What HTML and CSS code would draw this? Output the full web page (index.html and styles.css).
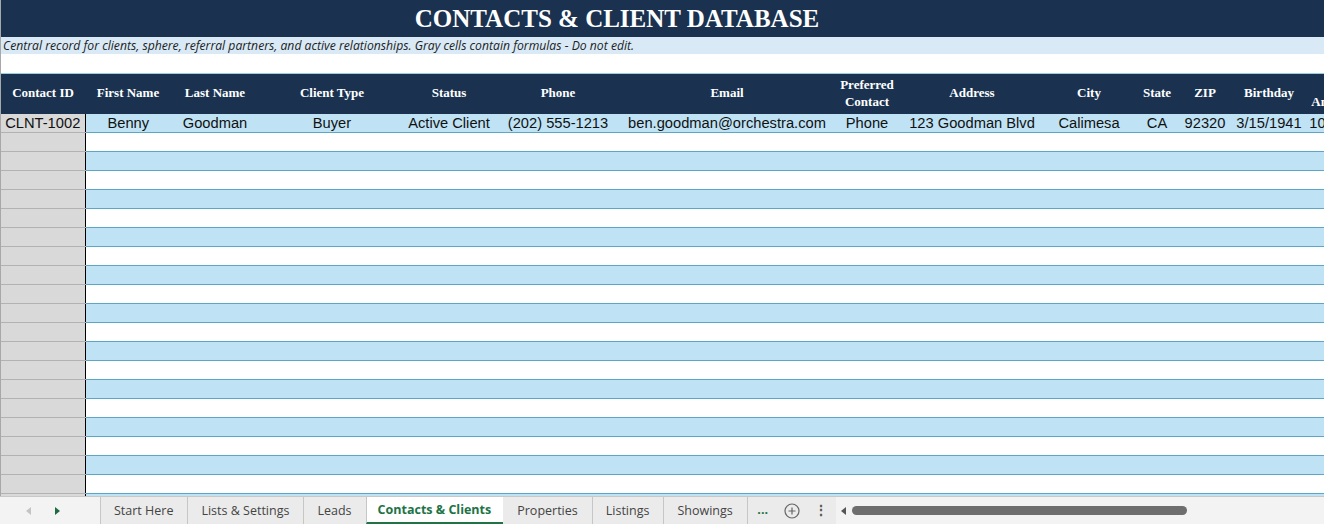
FILE: index.html
```html
<!DOCTYPE html>
<html lang="en">
<head>
    <meta charset="UTF-8">
    <title>Contacts &amp; Client Database</title>
    <link rel="stylesheet" href="styles.css">
</head>
<body>
    <div class="sheet">
        <div class="title-row">
            <div class="title">CONTACTS &amp; CLIENT DATABASE</div>
        </div>
        <div class="note-row">Central record for clients, sphere, referral partners, and active relationships. Gray cells contain formulas - Do not edit.</div>
        <div class="blank-row"></div>

        <div class="grid-wrap">
            <table class="grid" id="grid">
                <colgroup>
                    <col style="width:84px"><col style="width:86px"><col style="width:88px"><col style="width:146px">
                    <col style="width:88px"><col style="width:130px"><col style="width:208px"><col style="width:72px">
                    <col style="width:138px"><col style="width:96px"><col style="width:40px"><col style="width:56px">
                    <col style="width:72px"><col style="width:82px">
                </colgroup>
                <thead>
                    <tr>
                        <th>Contact ID</th>
                        <th>First Name</th>
                        <th>Last Name</th>
                        <th>Client Type</th>
                        <th>Status</th>
                        <th>Phone</th>
                        <th>Email</th>
                        <th>Preferred<br>Contact</th>
                        <th>Address</th>
                        <th>City</th>
                        <th>State</th>
                        <th>ZIP</th>
                        <th>Birthday</th>
                        <th>Home<br>Anniversary</th>
                    </tr>
                </thead>
                <tbody id="rows">
                    <tr class="blue">
                        <td class="id">CLNT-1002</td>
                        <td>Benny</td>
                        <td>Goodman</td>
                        <td>Buyer</td>
                        <td>Active Client</td>
                        <td>(202) 555-1213</td>
                        <td>ben.goodman@orchestra.com</td>
                        <td>Phone</td>
                        <td>123 Goodman Blvd</td>
                        <td>Calimesa</td>
                        <td>CA</td>
                        <td>92320</td>
                        <td>3/15/1941</td>
                        <td>10/12/2019</td>
                    </tr>
                </tbody>
            </table>
        </div>
    </div>

    <div class="tabbar">
        <div class="tab-nav">
            <span class="arrow left off"></span>
            <span class="arrow right"></span>
        </div>
        <div class="tabs">
            <div class="tab">Start Here</div>
            <div class="tab">Lists &amp; Settings</div>
            <div class="tab">Leads</div>
            <div class="tab active">Contacts &amp; Clients</div>
            <div class="tab">Properties</div>
            <div class="tab">Listings</div>
            <div class="tab">Showings</div>
            <div class="tab-more">...</div>
            <div class="tab-add">
                <svg width="16" height="16" viewBox="0 0 16 16"><circle cx="8" cy="8" r="7" fill="none" stroke="#666" stroke-width="1.2"/><path d="M8 4.5v7M4.5 8h7" stroke="#666" stroke-width="1.2"/></svg>
            </div>
            <div class="tab-dots">&#8942;</div>
        </div>
        <div class="hscroll">
            <span class="arrow left dark"></span>
            <div class="thumb"></div>
        </div>
    </div>

    <script>
        // fill the rest of the sheet with empty banded rows
        var body = document.getElementById('rows');
        for (var i = 0; i < 20; i++) {
            var tr = document.createElement('tr');
            if (i % 2 == 1) tr.className = 'blue';
            for (var c = 0; c < 14; c++) {
                var td = document.createElement('td');
                if (c == 0) td.className = 'id';
                tr.appendChild(td);
            }
            body.appendChild(tr);
        }
    </script>
</body>
</html>
```

FILE: styles.css
```css
body {
    margin: 0;
    padding: 0;
    overflow: hidden;
    background-color: #fff;
    font-family: "Liberation Sans", Arial, sans-serif;
}
.sheet {
    height: 496px;
    overflow: hidden;
    border-left: 1px solid #a8a8a8;
}
.title-row {
    height: 37px;
    background-color: #1a324f;
}
.title {
    width: 1232px;
    text-align: center;
    color: #fff;
    font-family: "Liberation Serif", "Times New Roman", serif;
    font-weight: bold;
    font-size: 25px;
    line-height: 37px;
}
.note-row {
    height: 17px;
    line-height: 17px;
    background-color: #d9eaf6;
    color: #222;
    font-family: "Open Sans", sans-serif;
    font-style: italic;
    font-size: 12.2px;
    padding-left: 2px;
    white-space: nowrap;
}
.blank-row {
    height: 19px;
    border-bottom: 1px solid #9ccbe4;
}
.grid-wrap {
    overflow: hidden;
}
.grid {
    table-layout: fixed;
    width: 1386px;
    border-collapse: collapse;
}
.grid th {
    height: 37px;
    padding: 0 0 3px 0;
    background-color: #1a324f;
    color: #fff;
    font-family: "Liberation Serif", "Times New Roman", serif;
    font-weight: bold;
    font-size: 13px;
    line-height: 17px;
    text-align: center;
    vertical-align: middle;
    white-space: nowrap;
    overflow: hidden;
}
.grid td {
    height: 18px;
    padding: 0;
    border-bottom: 1px solid #5ea6c6;
    font-size: 14.7px;
    line-height: 18px;
    color: #111;
    text-align: center;
    white-space: nowrap;
    overflow: hidden;
}
.grid tr.blue td {
    background-color: #bfe3f5;
}
.grid td.id,
.grid tr.blue td.id {
    background-color: #d9d9d9;
    border-bottom: 1px solid #b2b2b2;
    border-right: 1px solid #000;
}

/* sheet tabs */
.tabbar {
    height: 27px;
    display: flex;
    border-top: 1px solid #c8c8c8;
    background-color: #f3f3f3;
    font-family: "Open Sans", sans-serif;
    font-size: 12.5px;
    color: #444;
}
.tab-nav {
    width: 100px;
    display: flex;
    align-items: center;
    gap: 24px;
    padding-left: 26px;
    box-sizing: border-box;
}
.arrow {
    width: 0;
    height: 0;
    border-top: 4px solid transparent;
    border-bottom: 4px solid transparent;
}
.arrow.left {
    border-right: 5px solid #c4c4c4;
}
.arrow.right {
    border-left: 5px solid #1e6b3f;
}
.arrow.left.dark {
    border-right-color: #555;
}
.tabs {
    display: flex;
    align-items: stretch;
    background-color: #ebebeb;
}
.tab {
    padding: 1px 14px 0 13px;
    line-height: 25px;
    border-left: 1px solid #c6c6c6;
    white-space: nowrap;
}
.tab.active {
    background-color: #fff;
    color: #217346;
    font-weight: bold;
    border-bottom: 2px solid #217346;
    line-height: 23px;
    padding: 1px 12px 0 11px;
}
.tab.active + .tab {
    border-left-color: transparent;
}
.tab-more {
    width: 30px;
    border-left: 1px solid #c6c6c6;
    text-align: center;
    line-height: 26px;
    font-weight: bold;
    color: #217346;
}
.tab-add {
    width: 28px;
    display: flex;
    align-items: center;
    justify-content: center;
}
.tab-dots {
    width: 30px;
    line-height: 26px;
    text-align: center;
    font-size: 14px;
    font-weight: bold;
    color: #555;
}
.hscroll {
    flex: 1;
    display: flex;
    align-items: center;
    padding-left: 5px;
    gap: 6px;
}
.thumb {
    width: 335px;
    height: 9px;
    border-radius: 5px;
    background-color: #6e6e6e;
}
```
